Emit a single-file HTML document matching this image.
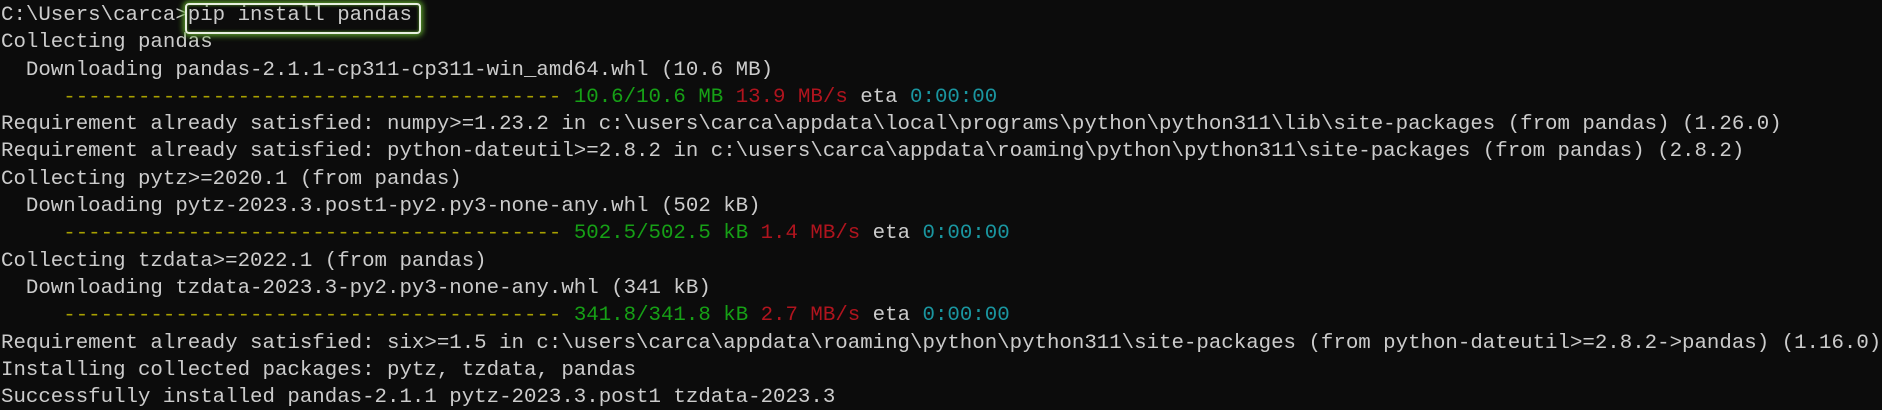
<!DOCTYPE html>
<html><head><meta charset="utf-8"><style>
html,body{margin:0;padding:0;background:#0c0c0c;width:1882px;height:410px;overflow:hidden}
pre{margin:0;padding:2px 0 0 1px;font-family:"Liberation Mono","DejaVu Sans Mono",monospace;font-size:20.75px;line-height:27.3px;color:#cccccc;white-space:pre}
.d{color:#a8a000}.g{color:#16a016}.r{color:#b0141e}.c{color:#1a96a0}
.box{position:absolute;left:185px;top:3px;width:232px;height:27px;border:2px solid #e8f0e0;border-radius:4px;box-shadow:0 0 6px 2px #5aa02a, inset 0 0 3px #5aa02a}
</style></head><body>
<div class="box"></div>
<pre>C:\Users\carca&gt;pip install pandas
Collecting pandas
  Downloading pandas-2.1.1-cp311-cp311-win_amd64.whl (10.6 MB)
     <span class="d">----------------------------------------</span> <span class="g">10.6/10.6 MB</span> <span class="r">13.9 MB/s</span> eta <span class="c">0:00:00</span>
Requirement already satisfied: numpy&gt;=1.23.2 in c:\users\carca\appdata\local\programs\python\python311\lib\site-packages (from pandas) (1.26.0)
Requirement already satisfied: python-dateutil&gt;=2.8.2 in c:\users\carca\appdata\roaming\python\python311\site-packages (from pandas) (2.8.2)
Collecting pytz&gt;=2020.1 (from pandas)
  Downloading pytz-2023.3.post1-py2.py3-none-any.whl (502 kB)
     <span class="d">----------------------------------------</span> <span class="g">502.5/502.5 kB</span> <span class="r">1.4 MB/s</span> eta <span class="c">0:00:00</span>
Collecting tzdata&gt;=2022.1 (from pandas)
  Downloading tzdata-2023.3-py2.py3-none-any.whl (341 kB)
     <span class="d">----------------------------------------</span> <span class="g">341.8/341.8 kB</span> <span class="r">2.7 MB/s</span> eta <span class="c">0:00:00</span>
Requirement already satisfied: six&gt;=1.5 in c:\users\carca\appdata\roaming\python\python311\site-packages (from python-dateutil&gt;=2.8.2-&gt;pandas) (1.16.0)
Installing collected packages: pytz, tzdata, pandas
Successfully installed pandas-2.1.1 pytz-2023.3.post1 tzdata-2023.3</pre>
</body></html>
